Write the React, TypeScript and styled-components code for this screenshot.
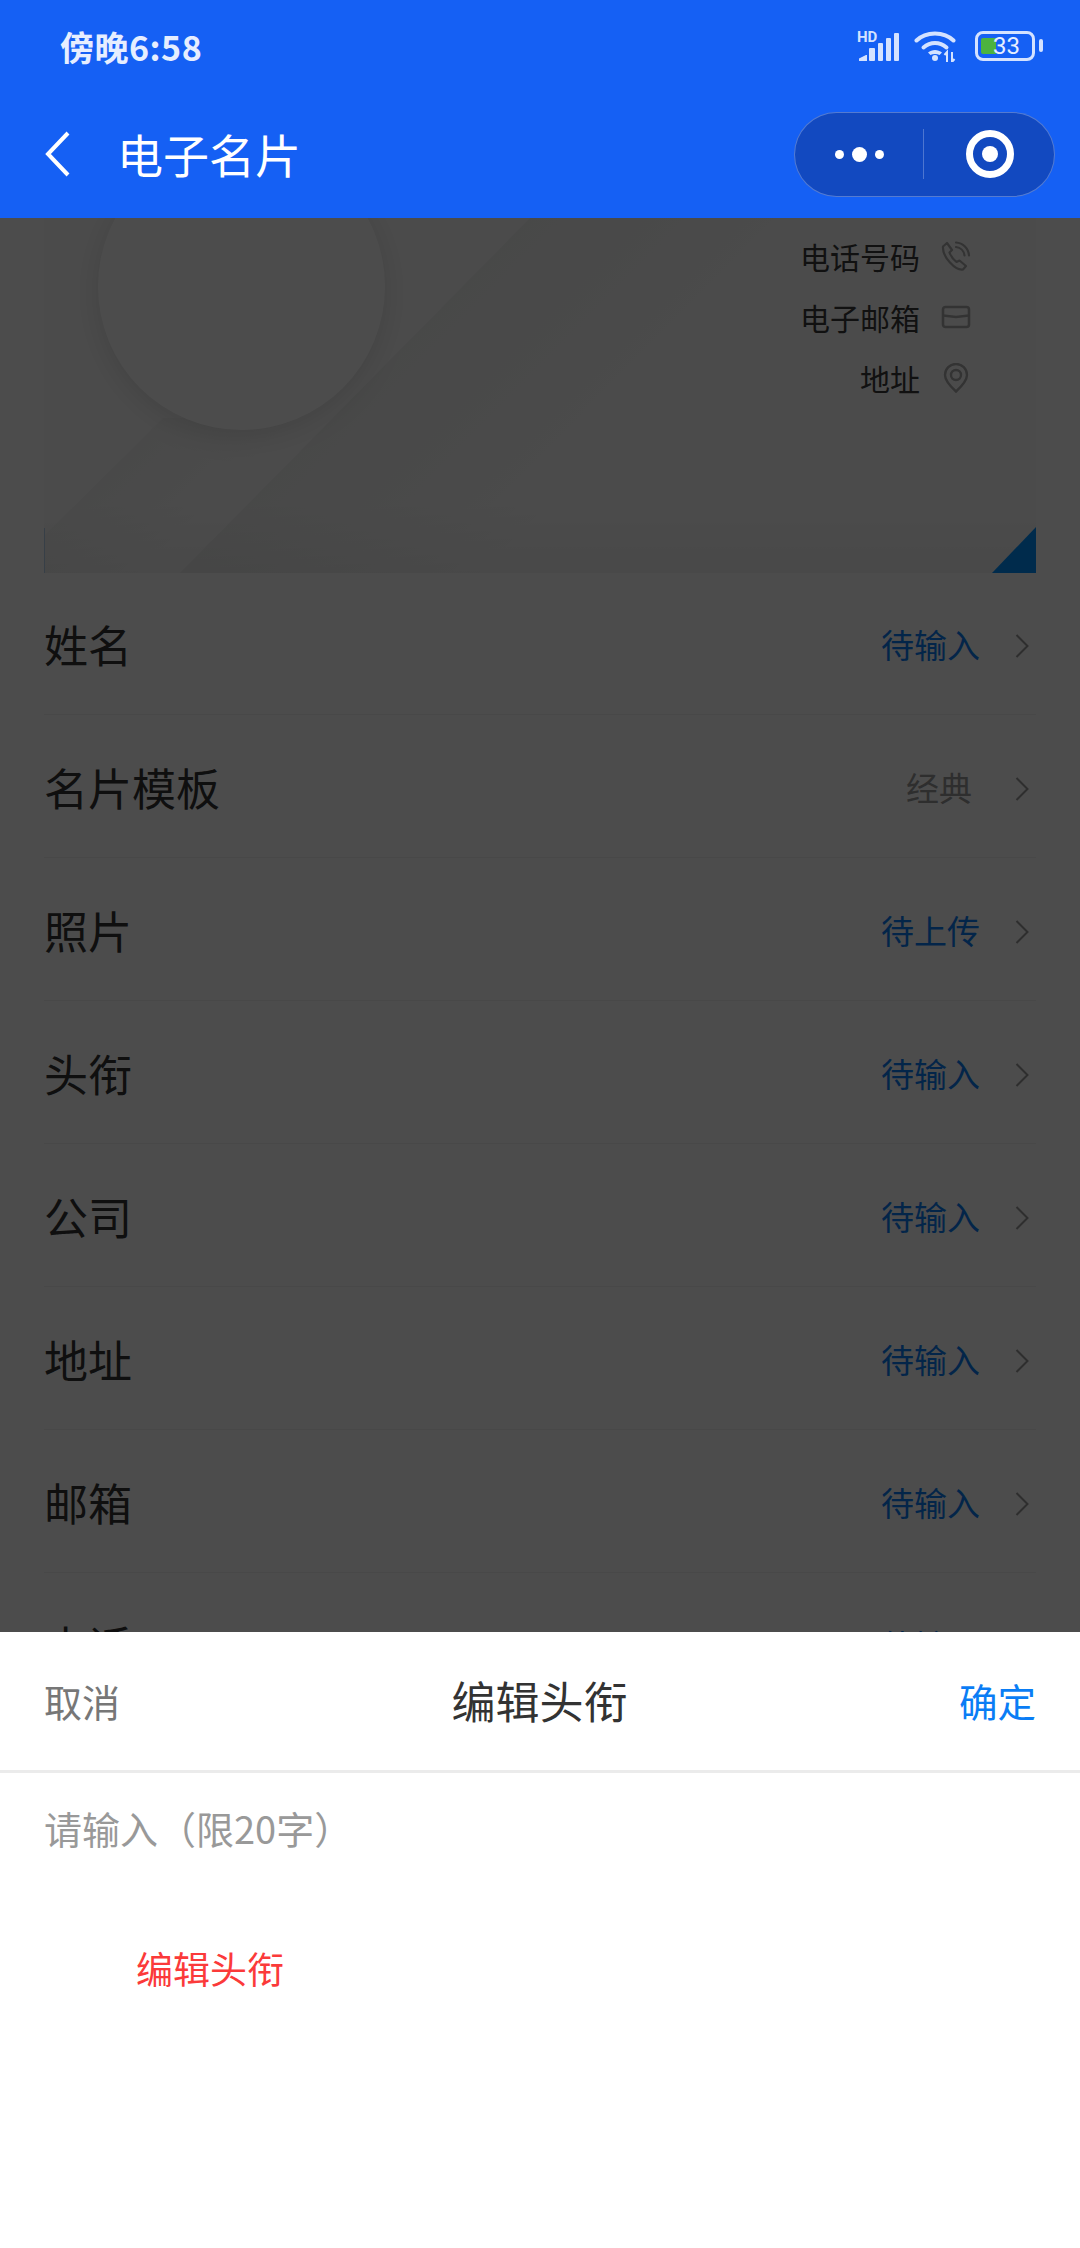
import styled, { createGlobalStyle } from "styled-components";

const GlobalStyle = createGlobalStyle`
  html, body {
    margin: 0;
    padding: 0;
    background: #ffffff;
  }
  * {
    box-sizing: border-box;
  }
`;

const rows = [
  { label: "姓名", value: "待输入", pending: true },
  { label: "名片模板", value: "经典", pending: false },
  { label: "照片", value: "待上传", pending: true },
  { label: "头衔", value: "待输入", pending: true },
  { label: "公司", value: "待输入", pending: true },
  { label: "地址", value: "待输入", pending: true },
  { label: "邮箱", value: "待输入", pending: true },
  { label: "电话", value: "待输入", pending: true },
];

const SignalIcon = () => (
  <SignalBox>
    <HdLabel>HD</HdLabel>
    <SvgBox width="43" height="31" viewBox="0 0 43 31">
      <g fill="#d4e2ff">
        <path d="M2 30v-2.500l7-3.500h1v6z" />
        <rect x="12" y="17" width="6" height="13" rx="1" />
        <rect x="21" y="12" width="5" height="18" rx="1" />
        <rect x="29" y="7" width="5" height="23" rx="1" />
        <rect x="37" y="2" width="5" height="28" rx="1" />
      </g>
    </SvgBox>
  </SignalBox>
);

const WifiIcon = () => (
  <SvgBox width="44" height="31" viewBox="0 0 44 31">
    <g fill="none" stroke="#d4e2ff" strokeWidth="4" strokeLinecap="round">
      <path d="M2.500 9.500C12 0 30 0 39.500 9.500" />
      <path d="M9.500 16.500c7-6 16-6 23 0" />
    </g>
    <path d="M14 21.500c4-3.500 10-3.500 14 0l-2.500 2.500c-2.500-1.500-6.500-1.500-9 0z" fill="#d4e2ff" />
    <circle cx="21" cy="27" r="3" fill="#d4e2ff" />
    <path d="M33 31v-10l-2.500 3M38 21v10l2.500-3" stroke="#d4e2ff" strokeWidth="2" fill="none" />
  </SvgBox>
);

const PhoneIcon = () => (
  <SvgBox width="30" height="30" viewBox="0 0 30 30">
    <g fill="none" stroke="#aaaaaa" strokeWidth="2.200" strokeLinecap="round" strokeLinejoin="round">
      <path d="M2 5.500 6 2l5 7-2.500 2.500c1 3 4 7 7 9.500l3-1.500 6.500 5.500-3 3.500C15 30 1 16 2 5.500z" />
      <path d="M15 6c4.500.5 8 4 8.500 8.500" />
      <path d="M15 1.500c7 .5 12.500 6 13 13" />
    </g>
  </SvgBox>
);

const CardIcon = () => (
  <SvgBox width="30" height="24" viewBox="0 0 30 24">
    <g fill="none" stroke="#aaaaaa" strokeWidth="2.600">
      <rect x="2" y="2" width="26" height="20" rx="2.500" />
      <path d="M2 10.500 15 12l13-1.500" />
    </g>
  </SvgBox>
);

const PinIcon = () => (
  <SvgBox width="26" height="30" viewBox="0 0 26 30">
    <g fill="none" stroke="#aaaaaa" strokeWidth="2.400">
      <path d="M13 28.500C7 23 2 17.500 2 12a11 11 0 0 1 22 0c0 5.500-5 11-11 16.500z" />
      <circle cx="13" cy="12" r="5" />
    </g>
  </SvgBox>
);

const Chevron = () => (
  <ChevronSvg width="14" height="24" viewBox="0 0 14 24">
    <path d="M1.500 1 12.500 12 1.500 23" fill="none" stroke="#999999" strokeWidth="2" />
  </ChevronSvg>
);

export default function App() {
  return (
    <>
      <GlobalStyle />
      <Screen>
        <TopBar>
          <StatusBar>
            <Clock>傍晚6:58</Clock>
            <StatusIcons>
              <SignalIcon />
              <WifiIcon />
              <Battery>
                <BatteryFill />
                <BatteryLevel>33</BatteryLevel>
                <BatteryNub />
              </Battery>
            </StatusIcons>
          </StatusBar>
          <NavBar>
            <BackButton width="26" height="46" viewBox="0 0 26 46">
              <path d="M23 2 3 23l20 21" fill="none" stroke="#fff" strokeWidth="4" />
            </BackButton>
            <NavTitle>电子名片</NavTitle>
            <Capsule>
              <MoreDots>
                <Dot />
                <Dot $big />
                <Dot />
              </MoreDots>
              <CapsuleDivider />
              <CloseRing />
            </Capsule>
          </NavBar>
        </TopBar>

        <Page>
          <BusinessCard>
            <CardArt viewBox="0 0 992 355" preserveAspectRatio="none">
              <defs>
                <linearGradient id="edgeShade" gradientUnits="userSpaceOnUse" x1="311" y1="177" x2="470" y2="334">
                  <stop offset="0" stopColor="#1c2c1c" stopOpacity="0.045" />
                  <stop offset="1" stopColor="#1c2c1c" stopOpacity="0" />
                </linearGradient>
                <linearGradient id="innerShade" gradientUnits="userSpaceOnUse" x1="60" y1="258" x2="130" y2="328">
                  <stop offset="0" stopColor="#1c2c1c" stopOpacity="0.03" />
                  <stop offset="1" stopColor="#1c2c1c" stopOpacity="0" />
                </linearGradient>
                <linearGradient id="floorShade" x1="0" y1="0" x2="0" y2="1">
                  <stop offset="0" stopColor="#000" stopOpacity="0" />
                  <stop offset="1" stopColor="#000" stopOpacity="0.035" />
                </linearGradient>
              </defs>
              <polygon points="136,355 486,0 800,0 450,355" fill="url(#edgeShade)" />
              <polygon points="1,317 119,200 300,200 136,355 1,355" fill="url(#innerShade)" />
              <rect x="0" y="285" width="992" height="70" fill="url(#floorShade)" />
            </CardArt>
            <CardEdge />
            <Avatar />
            <ContactList>
              <ContactRow>
                <ContactText>电话号码</ContactText>
                <ContactIcon>
                  <PhoneIcon />
                </ContactIcon>
              </ContactRow>
              <ContactRow>
                <ContactText>电子邮箱</ContactText>
                <ContactIcon>
                  <CardIcon />
                </ContactIcon>
              </ContactRow>
              <ContactRow>
                <ContactText>地址</ContactText>
                <ContactIcon>
                  <PinIcon />
                </ContactIcon>
              </ContactRow>
            </ContactList>
            <CardCorner />
          </BusinessCard>

          <FormList>
            {rows.map((row) => (
              <FormRow key={row.label}>
                <RowLabel>{row.label}</RowLabel>
                <RowValue $pending={row.pending}>{row.value}</RowValue>
                <Chevron />
              </FormRow>
            ))}
          </FormList>

          <Backdrop />

          <Sheet>
            <SheetHeader>
              <SheetCancel>取消</SheetCancel>
              <SheetTitle>编辑头衔</SheetTitle>
              <SheetConfirm>确定</SheetConfirm>
            </SheetHeader>
            <SheetPlaceholder>请输入（限20字）</SheetPlaceholder>
            <SheetNote>编辑头衔</SheetNote>
          </Sheet>
        </Page>
      </Screen>
    </>
  );
}

const Screen = styled.div`
  width: 1080px;
  height: 2248px;
  display: flex;
  flex-direction: column;
  overflow: hidden;
  font-family: "Noto Sans CJK SC", "Noto Sans", sans-serif;
`;

const TopBar = styled.header`
  height: 218px;
  flex: none;
  background: #1560f4;
`;

const StatusBar = styled.div`
  height: 92px;
  display: flex;
  align-items: center;
  justify-content: space-between;
  padding: 0 45px 0 60px;
`;

const Clock = styled.span`
  font-size: 34px;
  font-weight: 700;
  color: #e6eeff;
  letter-spacing: 0.5px;
`;

const StatusIcons = styled.div`
  display: flex;
  align-items: center;
  gap: 14px;
`;

const SvgBox = styled.svg`
  display: block;
  flex: none;
`;

const SignalBox = styled.div`
  position: relative;
  flex: none;
`;

const HdLabel = styled.span`
  position: absolute;
  left: 0;
  top: -1px;
  font-family: Roboto, sans-serif;
  font-size: 15px;
  font-weight: 700;
  line-height: 15px;
  color: #d4e2ff;
`;

const Battery = styled.div`
  width: 60px;
  height: 30px;
  margin-left: 3px;
  border: 3.5px solid #d4e2ff;
  border-radius: 8px;
  display: flex;
  align-items: center;
  position: relative;
`;

const BatteryFill = styled.div`
  width: 15px;
  height: 16px;
  margin-left: 3px;
  background: #4cb33f;
  border-radius: 2px 0 0 2px;
`;

const BatteryLevel = styled.span`
  font-family: Roboto, sans-serif;
  font-size: 24px;
  line-height: 1;
  color: #e6eeff;
  margin-left: -3px;
`;

const BatteryNub = styled.div`
  position: absolute;
  right: -11px;
  top: 5px;
  width: 4px;
  height: 13px;
  border-radius: 2px;
  background: #d4e2ff;
`;

const NavBar = styled.div`
  height: 124px;
  display: flex;
  align-items: center;
  padding: 0 25px 0 45px;
`;

const BackButton = styled.svg`
  display: block;
  flex: none;
`;

const NavTitle = styled.h1`
  margin: -3px 0 0 46px;
  font-size: 46px;
  font-weight: 400;
  line-height: 1;
  color: #ffffff;
  flex: 1;
`;

const Capsule = styled.div`
  width: 261px;
  height: 85px;
  display: flex;
  align-items: center;
  background: #1249c0;
  border: 1px solid rgba(255, 255, 255, 0.28);
  border-radius: 43px;
`;

const MoreDots = styled.div`
  width: 128px;
  display: flex;
  align-items: center;
  justify-content: center;
  gap: 8px;
`;

const Dot = styled.span<{ $big?: boolean }>`
  width: ${(props) => (props.$big ? "15px" : "9px")};
  height: ${(props) => (props.$big ? "15px" : "9px")};
  border-radius: 50%;
  background: #ffffff;
`;

const CapsuleDivider = styled.div`
  width: 1px;
  height: 50px;
  background: rgba(255, 255, 255, 0.25);
`;

const CloseRing = styled.div`
  width: 48px;
  height: 48px;
  margin-left: 42px;
  border-radius: 50%;
  border: 7px solid #ffffff;
  position: relative;

  &::after {
    content: "";
    position: absolute;
    left: 9px;
    top: 9px;
    width: 16px;
    height: 16px;
    border-radius: 50%;
    background: #ffffff;
  }
`;

const Page = styled.main`
  flex: 1;
  position: relative;
  overflow: hidden;
  background: #ffffff;
`;

const BusinessCard = styled.section`
  height: 355px;
  margin: 0 44px;
  display: flex;
  justify-content: space-between;
  position: relative;
  overflow: hidden;
  background: #fcfcfc;
`;

const CardArt = styled.svg`
  position: absolute;
  inset: 0;
  width: 100%;
  height: 100%;
`;

const CardEdge = styled.div`
  position: absolute;
  left: 0;
  bottom: 0;
  width: 1px;
  height: 45px;
  background: #b9d4ee;
`;

const Avatar = styled.div`
  width: 287px;
  height: 287px;
  margin: -75px 0 0 54px;
  border-radius: 50%;
  background: #ffffff;
  box-shadow: 0 6px 30px rgba(0, 0, 0, 0.12);
  position: relative;
`;

const ContactList = styled.div`
  padding: 16px 65px 0 0;
  display: flex;
  flex-direction: column;
  align-items: flex-end;
  gap: 18px;
  position: relative;
`;

const ContactRow = styled.div`
  height: 43px;
  display: flex;
  align-items: center;
  gap: 21px;
`;

const ContactText = styled.span`
  font-size: 30px;
  line-height: 1;
  color: #3a3a3a;
`;

const ContactIcon = styled.span`
  width: 30px;
  display: flex;
  justify-content: center;
`;

const CardCorner = styled.div`
  position: absolute;
  right: 0;
  bottom: 0;
  width: 44px;
  height: 46px;
  background: #0090ff;
  clip-path: polygon(100% 0, 100% 100%, 0 100%);
`;

const FormList = styled.div`
  margin-top: -1px;
  padding: 0 44px;
`;

const FormRow = styled.div`
  height: 143px;
  padding-top: 2px;
  display: flex;
  align-items: center;
  border-bottom: 1px solid #f0f0f0;
`;

const RowLabel = styled.span`
  flex: 1;
  font-size: 44px;
  line-height: 1;
  color: #333333;
`;

const RowValue = styled.span<{ $pending: boolean }>`
  font-size: 33px;
  line-height: 1;
  color: ${(props) => (props.$pending ? "#0a7df5" : "#999999")};
  margin-right: ${(props) => (props.$pending ? "35px" : "43px")};
`;

const ChevronSvg = styled.svg`
  display: block;
  flex: none;
  margin: 4px 7px 0 0;
`;

const Backdrop = styled.div`
  position: absolute;
  inset: 0;
  background: rgba(0, 0, 0, 0.7);
`;

const Sheet = styled.section`
  position: absolute;
  left: 0;
  right: 0;
  bottom: 0;
  height: 616px;
  background: #ffffff;
`;

const SheetHeader = styled.div`
  height: 141px;
  padding: 0 44px 2px;
  display: flex;
  align-items: center;
  justify-content: space-between;
  border-bottom: 3px solid #ebebeb;
`;

const SheetCancel = styled.span`
  font-size: 38px;
  color: #777777;
`;

const SheetTitle = styled.h2`
  margin: 0;
  font-size: 44px;
  font-weight: 400;
  color: #333333;
`;

const SheetConfirm = styled.span`
  font-size: 38.500px;
  color: #0a7df5;
`;

const SheetPlaceholder = styled.div`
  padding: 30px 44px 0;
  font-size: 38px;
  line-height: 50px;
  color: #999999;
`;

const SheetNote = styled.div`
  margin-top: 90px;
  padding-left: 136px;
  font-size: 37px;
  line-height: 50px;
  color: #fb3a3a;
`;
